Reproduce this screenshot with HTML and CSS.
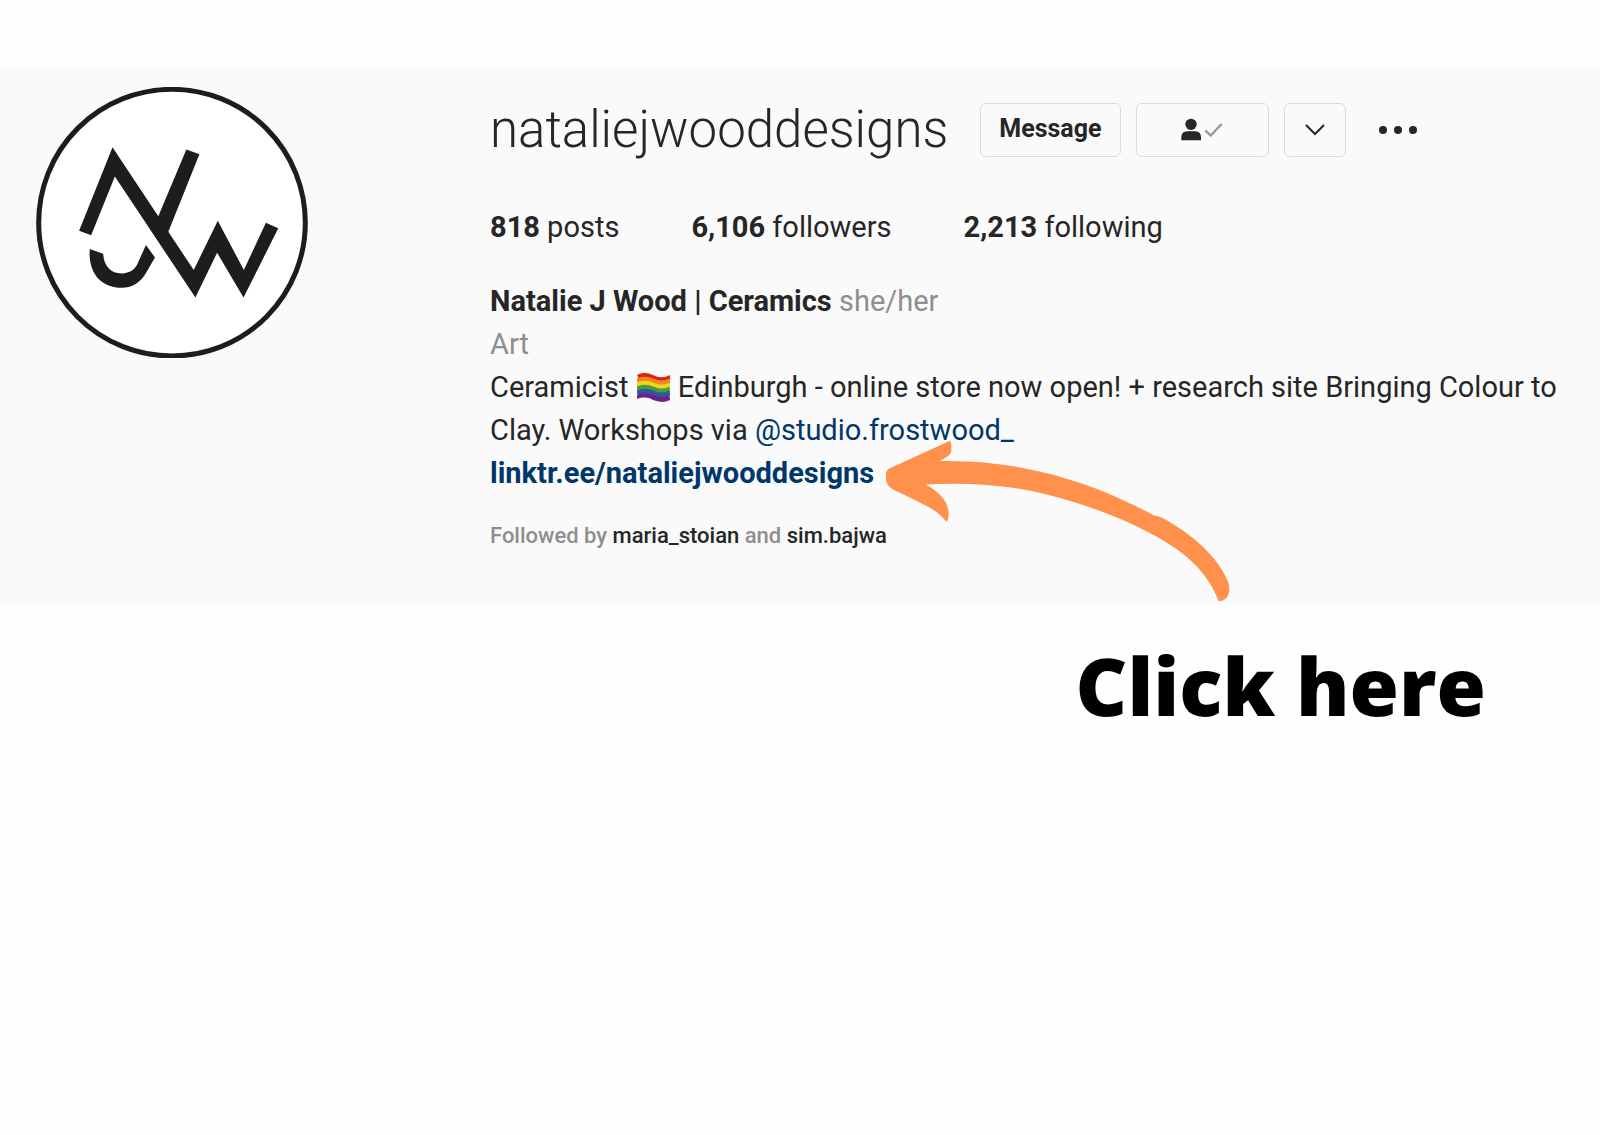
FILE: index.html
```html
<!DOCTYPE html>
<html lang="en">
<head>
    <meta charset="UTF-8">
    <meta name="viewport" content="width=device-width, initial-scale=1.0">
    <title>nataliejwooddesigns</title>
    <link rel="stylesheet" href="styles.css">
</head>
<body>
<main>
    <section class="profile">
        <svg class="avatar" viewBox="50 112 814 812" role="img" aria-label="NJW logo">
            <circle cx="457" cy="518" r="399" fill="#fff" stroke="#1d1d1b" stroke-width="15"/>
            <g fill="#1d1d1b">
                <path d="M179 542L279 292L416 499L500 299L539 313L446 545L522 660L594 512L672 660L738 518L775 535L671 742L592 608L527 742L286 380L215 556Z"/>
                <path d="M211 597L251 611C253 648 274 670 306 670C332 670 345 657 352 645L379 585L406 622L380 667C363 696 340 713 307 713C246 713 205 670 211 597Z"/>
            </g>
        </svg>

        <div class="profile-info">
            <header class="profile-header">
                <h1 class="username">nataliejwooddesigns</h1>
                <div class="actions">
                    <button class="btn btn-message" type="button">Message</button>
                    <button class="btn btn-following" type="button" aria-label="Following">
                        <svg width="42" height="24" viewBox="0 0 126 72">
                            <ellipse cx="30" cy="19" rx="17" ry="17" fill="#262626"/>
                            <path d="M1 67V58Q1 40 19 40H42Q60 40 60 58V67Z" fill="#262626"/>
                            <path d="M73 37L89 53L122 18" fill="none" stroke="#9a9a9a" stroke-width="7"/>
                        </svg>
                    </button>
                    <button class="btn btn-suggest" type="button" aria-label="Similar accounts">
                        <svg width="20" height="12" viewBox="0 0 20 12">
                            <path d="M1 1L10 10L19 1" fill="none" stroke="#262626" stroke-width="2"/>
                        </svg>
                    </button>
                    <button class="btn-more" type="button" aria-label="Options">
                        <svg width="38" height="10" viewBox="0 0 38 10" fill="#262626">
                            <circle cx="4" cy="5" r="4"/>
                            <circle cx="19" cy="5" r="4"/>
                            <circle cx="34" cy="5" r="4"/>
                        </svg>
                    </button>
                </div>
            </header>

            <ul class="stats">
                <li><b>818</b> posts</li>
                <li><b>6,106</b> followers</li>
                <li><b>2,213</b> following</li>
            </ul>

            <div class="bio">
                <p><b>Natalie J Wood | Ceramics</b> <span class="muted">she/her</span></p>
                <p class="muted">Art</p>
                <p>Ceramicist
                    <svg class="flag" viewBox="0 0 33 29" role="img" aria-label="Rainbow flag">
                        <clipPath id="flag-shape">
                            <path d="M0 2C6 -1 11 0 16 2C22 5 27 5 33 2V27C27 30 22 29 16 27C11 24 6 24 0 26Z"/>
                        </clipPath>
                        <g clip-path="url(#flag-shape)" fill="none" stroke-width="5">
                            <path d="M0 2C6 -1 11 0 16 2C22 5 27 5 33 2" stroke="#e22016" stroke-width="8"/>
                            <path d="M0 8C6 5 11 6 16 8C22 11 27 11 33 8" stroke="#f28917"/>
                            <path d="M0 12C6 9 11 10 16 12C22 15 27 15 33 12" stroke="#efd524"/>
                            <path d="M0 16C6 13 11 14 16 16C22 19 27 19 33 16" stroke="#4b9b3b"/>
                            <path d="M0 20C6 17 11 18 16 20C22 23 27 23 33 20" stroke="#2c58a4"/>
                            <path d="M0 25C6 22 11 23 16 25C22 28 27 28 33 25" stroke="#6d2380" stroke-width="6"/>
                        </g>
                    </svg>
                    Edinburgh - online store now open! + research site Bringing Colour to Clay. Workshops via <a href="#">@studio.frostwood_</a></p>
                <p class="website">
                    <a href="#">linktr.ee/nataliejwooddesigns</a>
                    <svg class="arrow" viewBox="48 65 1033 481" aria-hidden="true">
                        <path fill="#ff914d" d="M56 148L234 67Q243 63 244 73V95Q244 103 236 109L210 125C340 122 470 142 590 178C690 208 760 240 852 288Q866 290 882 298C965 345 1045 410 1076 490C1086 525 1070 545 1047 546C1024 485 985 435 920 389C820 320 670 258 500 218C390 194 270 189 167 196C212 220 245 256 234 300Q232 309 226 304C205 275 170 261 144 247L68 210Q49 200 48 180V163Q49 152 56 148Z"/>
                    </svg>
                </p>
            </div>

            <p class="followed-by">Followed by <a href="#">maria_stoian</a> and <a href="#">sim.bajwa</a></p>
        </div>
    </section>

    <p class="callout">Click here</p>
</main>
</body>
</html>
```
FILE: styles.css
```css
* {
    margin: 0;
    padding: 0;
    box-sizing: border-box;
}

body {
    font-family: Roboto, 'Liberation Sans', sans-serif;
    font-size: 29px;
    line-height: 43px;
    color: #262626;
    background: #fefefe;
}

main {
    padding-top: 66px;
}

a {
    color: #00376b;
    text-decoration: none;
}

button {
    font-family: inherit;
    color: inherit;
    background: none;
    cursor: pointer;
}

/* profile band */
.profile {
    display: grid;
    grid-template-columns: 272px 1fr;
    column-gap: 182px;
    align-items: start;
    padding: 21px 36px 49px;
    background: #fafafa;
}

.avatar {
    display: block;
    width: 100%;
}

.profile-header {
    display: flex;
    align-items: center;
    gap: 32px;
    padding-top: 16px;
}

.username {
    font-size: 51px;
    font-weight: 300;
    line-height: 54px;
}

.actions {
    display: flex;
    align-items: center;
    gap: 15px;
}

.btn {
    display: flex;
    align-items: center;
    justify-content: center;
    height: 54px;
    border: 1px solid #dbdbdb;
    border-radius: 6px;
}

.btn-message {
    padding: 0 18px 4px;
    font-size: 25px;
    font-weight: 700;
}

.btn-following {
    width: 133px;
}

.btn-suggest {
    width: 62px;
}

.btn-more {
    display: flex;
    margin-left: 18px;
    border: none;
}

/* counters */
.stats {
    display: flex;
    gap: 72px;
    padding: 49px 0 31px;
    list-style: none;
}

.muted {
    color: #8e8e8e;
}

.flag {
    width: 33px;
    height: 29px;
    margin: 0 1px;
    vertical-align: -5px;
}

.website {
    display: flex;
    align-items: center;
    position: relative;
    width: max-content;
    font-weight: 700;
}

/* hand drawn arrow lies over the text around the link */
.arrow {
    position: absolute;
    left: 100%;
    top: -11px;
    width: 344px;
    margin-left: 12px;
}

.followed-by {
    padding-top: 19px;
    font-size: 22px;
    font-weight: 500;
    color: #8e8e8e;
}

.followed-by a {
    color: #262626;
}

.callout {
    padding: 24px 114px 0 0;
    font-family: 'Open Sans', sans-serif;
    font-size: 80px;
    font-weight: 800;
    line-height: 110px;
    text-align: right;
    color: #000;
}
```
